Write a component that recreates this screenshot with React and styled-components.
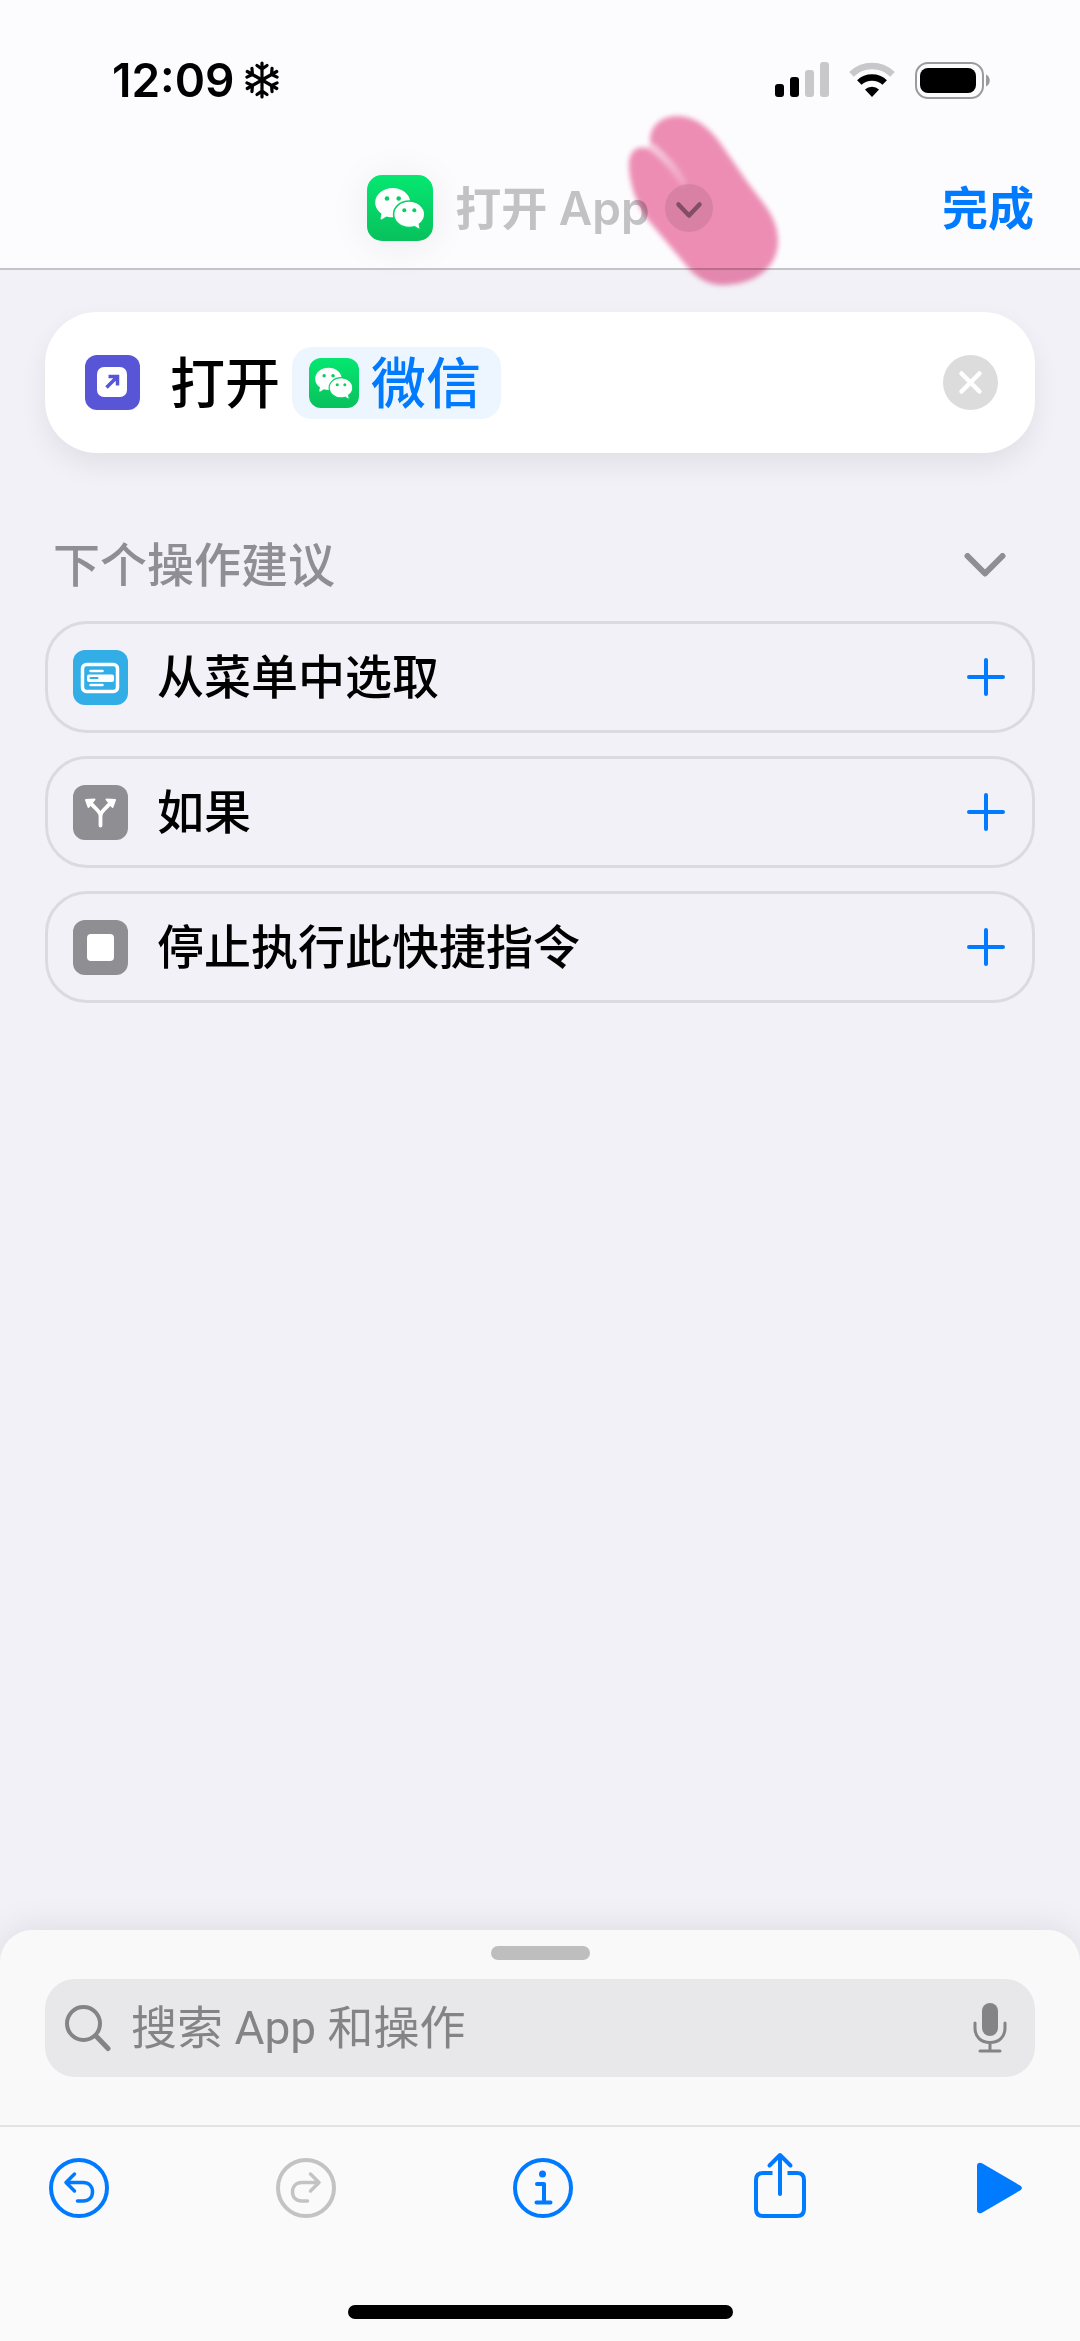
import React from 'react';
import styled, { createGlobalStyle } from 'styled-components';

const GlobalStyle = createGlobalStyle`
    * {
        box-sizing: border-box;
    }
    body {
        margin: 0;
        background-color: #f2f1f7;
        font-family: Inter, "Noto Sans CJK SC", sans-serif;
        color: #000;
    }
    button, input {
        font-family: inherit;
    }
`;

const Page = styled.div`
    min-height: 100vh;
    display: flex;
    flex-direction: column;
`;

const Header = styled.header`
    position: relative;
    background-color: #fcfcfe;
    border-bottom: 2px solid #c5c4c9;
`;

const StatusBar = styled.div`
    height: 160px;
    padding: 0 89px 0 112px;
    display: flex;
    align-items: center;
    justify-content: space-between;
`;

const StatusGroup = styled.div`
    display: flex;
    align-items: center;
    gap: ${props => props.$gap}px;
`;

const Time = styled.span`
    font-size: 46px;
    font-weight: 600;
    line-height: 48px;
`;

const NavBar = styled.div`
    height: 108px;
    padding: 0 46px 12px;
    display: grid;
    grid-template-columns: 1fr auto 1fr;
    align-items: center;
`;

const TitleButton = styled.button`
    grid-column: 2;
    display: flex;
    align-items: center;
    padding: 0;
    border: none;
    background: none;
    color: #c2c2c4;
    font-size: 46px;
    font-weight: 600;
    line-height: 66px;
`;

const TitleText = styled.span`
    margin: 0 15px 0 22px;
`;

const AppIcon = styled.svg`
    display: block;
    width: ${props => props.$size}px;
    height: ${props => props.$size}px;
    border-radius: ${props => props.$radius}px;
    box-shadow: ${props => (props.$shadow ? '0 4px 40px rgba(0, 0, 0, 0.07)' : 'none')};
`;

const DoneButton = styled.button`
    grid-column: 3;
    justify-self: end;
    padding: 0;
    border: none;
    background: none;
    color: #007aff;
    font-size: 46px;
    font-weight: 700;
    line-height: 66px;
`;

const Icon = styled.svg`
    display: block;
    flex: none;
`;

/* highlighter mark lying over the title arrow */
const Marker = styled.svg`
    position: absolute;
    left: calc(50% + 70px);
    top: 100px;
    mix-blend-mode: multiply;
    pointer-events: none;
`;

const Content = styled.main`
    flex: 1;
    padding: 42px 45px 0;
`;

const ActionCard = styled.section`
    height: 141px;
    padding: 0 37px 0 40px;
    display: flex;
    align-items: center;
    background-color: #fff;
    border-radius: 52px;
    box-shadow: 0 12px 28px rgba(0, 0, 0, 0.07);
`;

const ActionName = styled.span`
    margin-left: 30px;
    font-size: 55px;
    font-weight: 500;
    line-height: 72px;
`;

const Token = styled.button`
    height: 72px;
    margin: 0 auto 0 12px;
    padding: 0 20px 0 17px;
    display: flex;
    align-items: center;
    gap: 12px;
    border: none;
    border-radius: 20px;
    background-color: #edf6ff;
    color: #007aff;
    font-size: 55px;
    font-weight: 500;
    line-height: 72px;
`;

const IconButton = styled.button`
    display: flex;
    align-items: center;
    justify-content: center;
    padding: 0;
    border: none;
    background: none;
    color: ${props => props.$color || '#007aff'};
`;

const SectionHeader = styled.div`
    margin: 76px 29px 20px 8px;
    height: 72px;
    display: flex;
    align-items: center;
    justify-content: space-between;
`;

const SectionTitle = styled.h2`
    margin: 0;
    color: #8e8e93;
    font-size: 47px;
    font-weight: 500;
    line-height: 72px;
`;

const List = styled.ul`
    margin: 0;
    padding: 0;
    list-style: none;
    display: flex;
    flex-direction: column;
    gap: 23px;
`;

const Suggestion = styled.li`
    height: 112px;
    padding: 0 27px 0 25px;
    display: flex;
    align-items: center;
    border: 3px solid #dbdbdf;
    border-radius: 42px;
`;

const SuggestionName = styled.span`
    flex: 1;
    margin-left: 29px;
    font-size: 47px;
    font-weight: 500;
    line-height: 72px;
`;

const Sheet = styled.section`
    padding: 16px 45px 48px;
    background-color: #f9f9f9;
    border-radius: 32px 32px 0 0;
    box-shadow: 0 0 36px rgba(0, 0, 0, 0.1);
    clip-path: inset(-60px 0 0 0);
`;

const Handle = styled.div`
    width: 99px;
    height: 14px;
    margin: 0 auto 19px;
    border-radius: 7px;
    background-color: #bebebe;
`;

const SearchBox = styled.label`
    height: 98px;
    padding: 0 28px 0 20px;
    display: flex;
    align-items: center;
    border-radius: 30px;
    background-color: #e8e8ea;
    color: #848487;
`;

const SearchInput = styled.input`
    flex: 1;
    min-width: 0;
    height: 72px;
    margin: 0 20px;
    padding: 0;
    border: none;
    outline: none;
    background: none;
    color: #000;
    font-family: Roboto, "Noto Sans CJK SC", sans-serif;
    font-size: 46px;
    &::placeholder{
        color: #848487;
        opacity: 1;
    }
`;

const Toolbar = styled.nav`
    height: 180px;
    padding: 25px 58px 0 49px;
    display: grid;
    grid-template-columns: 138fr repeat(3, 237fr) 124fr;
    align-items: start;
    justify-items: center;
    border-top: 2px solid #e3e3e4;
    background-color: #fafafb;
    & > :first-child{
        justify-self: start;
    }
    & > :last-child{
        justify-self: end;
    }
`;

const ToolButton = styled(IconButton)`
    height: 72px;
`;

const HomeArea = styled.div`
    padding-bottom: 22px;
    background-color: #fafafb;
`;

const HomeIndicator = styled.div`
    width: 385px;
    height: 14px;
    margin: 0 auto;
    border-radius: 7px;
    background-color: #000;
`;

const WeChat = ({ size, radius, shadow, id }) => (
    <AppIcon viewBox="0 0 66 66" $size={size} $radius={radius} $shadow={shadow} aria-hidden="true">
        <defs>
            <linearGradient id={id} x1="0" y1="0" x2="0" y2="1">
                <stop offset="0" stopColor="#05e771" />
                <stop offset="1" stopColor="#08c15c" />
            </linearGradient>
        </defs>
        <rect width="66" height="66" fill={`url(#${id})`} />
        <path
            fill="#fff"
            d="M25.7 13C16 13 8.2 19.4 8.2 27.6c0 4.6 2.4 8.4 6.3 11.1l-.9 4.6c-.2 1 .5 1.4 1.3.9l4.6-2.8c2 .6 4 .9 6.2.9 9.7 0 17.5-6.5 17.5-14.7S35.4 13 25.7 13z"
        />
        <path
            fill="#fff"
            stroke="#07d266"
            strokeWidth="1.6"
            d="M42.2 26c8.6 0 15.6 6 15.6 13.3 0 4-2 7.5-5.4 9.9l.7 3.7c.2 1.2-.7 1.7-1.6 1.2l-3.9-2.3c-1.7.5-3.5.8-5.4.8-8.6 0-15.6-6-15.6-13.3S33.6 26 42.2 26z"
        />
        <g fill="#08cd64">
            <circle cx="20" cy="23.5" r="2.3" />
            <circle cx="31.7" cy="23.5" r="2.3" />
            <circle cx="37.3" cy="35.3" r="2" />
            <circle cx="47.3" cy="35.3" r="2" />
        </g>
    </AppIcon>
);

const Snowflake = () => (
    <Icon width="34" height="38" viewBox="0 0 34 38" fill="none" stroke="#000" strokeWidth="3.2" strokeLinecap="round" aria-hidden="true">
        {[0, 60, 120, 180, 240, 300].map(angle => (
            <path key={angle} transform={`rotate(${angle} 17 19)`} d="M17 19V2M12 4.5L17 8l5-3.5" />
        ))}
    </Icon>
);

const Signal = () => (
    <Icon width="54" height="36" viewBox="0 0 54 36" aria-hidden="true">
        <rect x="0" y="22" width="9" height="13" rx="3" />
        <rect x="15" y="15" width="9" height="20" rx="3" />
        <rect x="30" y="8" width="9" height="27" rx="3" fill="#c8c8ca" />
        <rect x="45" y="0" width="9" height="35" rx="3" fill="#c8c8ca" />
    </Icon>
);

const Wifi = () => (
    <Icon width="46" height="36" viewBox="0 0 46 36" fill="none" aria-hidden="true">
        <path d="M2.5 12.3a29.5 29.5 0 0 1 41 0" stroke="#c8c8ca" strokeWidth="6.5" />
        <path d="M10.3 20.5a18.5 18.5 0 0 1 25.4 0" stroke="#000" strokeWidth="6.5" />
        <path d="M23 35l-7-7.5a10 10 0 0 1 14 0z" fill="#000" />
    </Icon>
);

const Battery = () => (
    <Icon width="76" height="37" viewBox="0 0 76 37" aria-hidden="true">
        <rect x="1" y="1" width="67" height="35" rx="12" fill="none" stroke="#9b9b9d" strokeWidth="2" />
        <rect x="5" y="6" width="56" height="25" rx="8" />
        <path d="M71 12.5c5 2 5 10 0 12z" fill="#9b9b9d" />
    </Icon>
);

const Tile = ({ color, children }) => (
    <Icon width="55" height="55" viewBox="0 0 55 55" aria-hidden="true">
        <rect width="55" height="55" rx="12" fill={color} />
        {children}
    </Icon>
);

const MenuTile = () => (
    <Tile color="#32ade6">
        <rect x="9.5" y="14.5" width="35" height="27" rx="4" fill="none" stroke="#fff" strokeWidth="3.5" />
        <path d="M17.5 21h12M17.5 35h12" stroke="#fff" strokeWidth="2.5" strokeLinecap="round" />
        <rect x="14" y="24.5" width="27" height="7.5" rx="2" fill="#fff" />
        <path d="M17.5 28h7" stroke="#32ade6" strokeWidth="2" strokeLinecap="round" />
    </Tile>
);

const BranchTile = () => (
    <Tile color="#8e8e93">
        <path d="M27.5 40.5V31c0-5-6-8-10-13M27.5 31c0-5 6-8 10-13" fill="none" stroke="#fff" strokeWidth="3.8" strokeLinecap="round" />
        <path d="M13 15l8.5-.5-6 7.5zM42 15l-8.5-.5 6 7.5z" fill="#fff" stroke="#fff" strokeWidth="2" strokeLinejoin="round" />
    </Tile>
);

const StopTile = () => (
    <Tile color="#8e8e93">
        <rect x="14" y="14" width="27" height="27" rx="4" fill="#fff" />
    </Tile>
);

const Plus = () => (
    <Icon width="38" height="38" viewBox="0 0 38 38" stroke="currentColor" strokeWidth="4" strokeLinecap="round" aria-hidden="true">
        <path d="M19 2v34M2 19h34" />
    </Icon>
);

const suggestions = [
    { name: '从菜单中选取', tile: <MenuTile /> },
    { name: '如果', tile: <BranchTile /> },
    { name: '停止执行此快捷指令', tile: <StopTile /> },
];

const App = () => {
    return (
        <Page>
            <GlobalStyle />
            <Header>
                <StatusBar>
                    <StatusGroup $gap={10}>
                        <Time>12:09</Time>
                        <Snowflake />
                    </StatusGroup>
                    <StatusGroup $gap={20}>
                        <Signal />
                        <Wifi />
                        <Battery />
                    </StatusGroup>
                </StatusBar>
                <NavBar>
                    <TitleButton>
                        <WeChat size={66} radius={15} shadow id="wechat-title" />
                        <TitleText>打开 App</TitleText>
                        <Icon width="48" height="48" viewBox="0 0 48 48" aria-hidden="true">
                            <circle cx="24" cy="24" r="24" fill="#e6e6e8" />
                            <path d="M13.5 20.5L24 31.5l10.5-11" fill="none" stroke="#8a8a8e" strokeWidth="4.5" strokeLinecap="round" strokeLinejoin="round" />
                        </Icon>
                    </TitleButton>
                    <DoneButton>完成</DoneButton>
                </NavBar>
                <Marker width="190" height="200" viewBox="0 0 190 200" aria-hidden="true">
                    <defs>
                        <filter id="marker-soft">
                            <feGaussianBlur stdDeviation="2.5" />
                        </filter>
                        <linearGradient id="marker-groove" gradientUnits="userSpaceOnUse" x1="43" y1="48" x2="74" y2="84">
                            <stop offset="0" stopColor="#f9cddd" />
                            <stop offset="1" stopColor="#f3a5c3" />
                        </linearGradient>
                    </defs>
                    <g filter="url(#marker-soft)">
                        <path
                            fill="#f08fb5"
                            d="M42 50C35 30 49 16 67 16c21 0 36 16 46 31l25 36 16 21c9 12 14 24 14 37 0 26-22 44-56 44-14 0-24-7-32-15L38 120C26 104 19 82 19 65c0-17 11-21 23-15z"
                        />
                        <path d="M42 47c10 8 22 20 31 35" fill="none" stroke="url(#marker-groove)" strokeWidth="7" strokeLinecap="round" />
                    </g>
                </Marker>
            </Header>
            <Content>
                <ActionCard>
                    <Tile color="#5856d6">
                        <rect x="12" y="12" width="30" height="30" rx="7" fill="#fff" />
                        <path d="M21.5 32.5L32 22M23.5 21.5h9v9" fill="none" stroke="#5856d6" strokeWidth="3.5" />
                    </Tile>
                    <ActionName>打开</ActionName>
                    <Token>
                        <WeChat size={50} radius={12} id="wechat-token" />
                        微信
                    </Token>
                    <IconButton aria-label="移除">
                        <Icon width="55" height="55" viewBox="0 0 55 55" aria-hidden="true">
                            <circle cx="27.5" cy="27.5" r="27.5" fill="#dcdcdd" />
                            <path d="M18.5 18.5l18 18M36.5 18.5l-18 18" stroke="#fff" strokeWidth="4.5" strokeLinecap="round" />
                        </Icon>
                    </IconButton>
                </ActionCard>
                <SectionHeader>
                    <SectionTitle>下个操作建议</SectionTitle>
                    <IconButton $color="#8e8e93" aria-label="收起">
                        <Icon width="42" height="24" viewBox="0 0 42 24" fill="none" stroke="currentColor" strokeWidth="6" strokeLinecap="round" strokeLinejoin="round" aria-hidden="true">
                            <path d="M3.5 3L21 20.5 38.5 3" />
                        </Icon>
                    </IconButton>
                </SectionHeader>
                <List>
                    {suggestions.map(item => (
                        <Suggestion key={item.name}>
                            {item.tile}
                            <SuggestionName>{item.name}</SuggestionName>
                            <IconButton aria-label={`添加${item.name}`}>
                                <Plus />
                            </IconButton>
                        </Suggestion>
                    ))}
                </List>
            </Content>
            <Sheet>
                <Handle />
                <SearchBox>
                    <Icon width="46" height="48" viewBox="0 0 46 48" fill="none" stroke="currentColor" strokeWidth="4" aria-hidden="true">
                        <circle cx="18.5" cy="19.5" r="16.5" />
                        <path d="M31 32l12 12.5" strokeWidth="5" strokeLinecap="round" />
                    </Icon>
                    <SearchInput type="text" placeholder="搜索 App 和操作" aria-label="搜索 App 和操作" />
                    <IconButton $color="#848487" aria-label="听写">
                        <Icon width="34" height="50" viewBox="0 0 34 50" fill="none" stroke="currentColor" strokeWidth="3" strokeLinecap="round" aria-hidden="true">
                            <rect x="9" y="0" width="16" height="33" rx="8" fill="currentColor" stroke="none" />
                            <path d="M2 20v5c0 9 6 14.5 15 14.5S32 34 32 25v-5M17 39.5V48M7 48h20" />
                        </Icon>
                    </IconButton>
                </SearchBox>
            </Sheet>
            <Toolbar>
                <ToolButton aria-label="撤销">
                    <Icon width="60" height="60" viewBox="0 0 60 60" fill="none" stroke="currentColor" strokeWidth="4" strokeLinecap="round" strokeLinejoin="round" aria-hidden="true">
                        <circle cx="30" cy="30" r="28" />
                        <path d="M25.5 16L17 24.5l8.5 8.5M17 24.5h17c6 0 9.5 4 9.5 9.5s-3.5 9-9.5 9h-5.5" strokeWidth="3.5" />
                    </Icon>
                </ToolButton>
                <ToolButton $color="#c3c3c3" aria-label="重做">
                    <Icon width="60" height="60" viewBox="0 0 60 60" fill="none" stroke="currentColor" strokeWidth="4" strokeLinecap="round" strokeLinejoin="round" aria-hidden="true">
                        <circle cx="30" cy="30" r="28" />
                        <path d="M34.5 16l8.500 8.500-8.500 8.500M43 24.500H26c-6 0-9.500 4-9.500 9.500s3.500 9 9.500 9h5.500" strokeWidth="3.5" />
                    </Icon>
                </ToolButton>
                <ToolButton aria-label="信息">
                    <Icon width="60" height="60" viewBox="0 0 60 60" fill="none" stroke="currentColor" strokeWidth="4" strokeLinecap="round" strokeLinejoin="round" aria-hidden="true">
                        <circle cx="30" cy="30" r="28" />
                        <circle cx="29.5" cy="16" r="3.5" fill="currentColor" stroke="none" />
                        <path d="M24 26h7v18M23.5 44.5h14" />
                    </Icon>
                </ToolButton>
                <ToolButton aria-label="共享">
                    <Icon width="52" height="72" viewBox="0 0 52 72" fill="none" stroke="currentColor" strokeWidth="4" aria-hidden="true">
                        <path d="M18.5 21H9c-4.500 0-7 2.500-7 7v29c0 4.500 2.500 7 7 7h34c4.500 0 7-2.500 7-7V28c0-4.500-2.500-7-7-7h-9.500" />
                        <path d="M26 42V3M15.500 13.500L26 3l10.500 10.500" strokeLinecap="round" strokeLinejoin="round" />
                    </Icon>
                </ToolButton>
                <ToolButton aria-label="运行">
                    <Icon width="45" height="52" viewBox="0 0 45 52" fill="currentColor" aria-hidden="true">
                        <path d="M0 4C0 1 2.500 0 5 1.300l38 22.200c2.500 1.500 2.500 3.500 0 5L5 50.700C2.500 52 0 51 0 48z" />
                    </Icon>
                </ToolButton>
            </Toolbar>
            <HomeArea>
                <HomeIndicator />
            </HomeArea>
        </Page>
    );
};

export default App;
